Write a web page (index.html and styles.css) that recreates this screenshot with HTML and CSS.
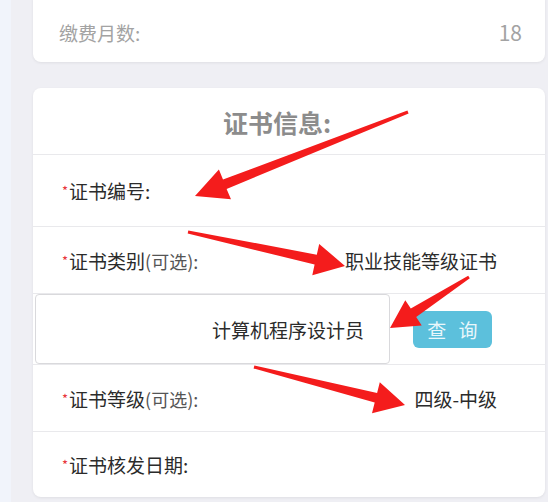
FILE: index.html
```html
<!DOCTYPE html>
<html lang="zh-CN">
<head>
<meta charset="utf-8">
<title>证书信息</title>
<link rel="stylesheet" href="styles.css">
</head>
<body>
<div class="page">
  <div class="rail"></div>
  <div class="main">
    <section class="card card-top">
      <div class="pay-row">
        <span class="pay-label">缴费月数:</span>
        <span class="pay-value">18</span>
      </div>
    </section>

    <section class="card card-cert">
      <div class="cert-title">证书信息:</div>
      <div class="row row-1">
        <span class="label"><i class="req">*</i>证书编号:</span>
      </div>
      <div class="row row-2">
        <span class="label"><i class="req">*</i>证书类别<span class="opt">(可选):</span></span>
        <span class="value">职业技能等级证书</span>
      </div>
      <div class="row row-search">
        <div class="search-box">计算机程序设计员</div>
        <button class="search-btn">查 询</button>
      </div>
      <div class="row row-3">
        <span class="label"><i class="req">*</i>证书等级<span class="opt">(可选):</span></span>
        <span class="value">四级-中级</span>
      </div>
      <div class="row row-4">
        <span class="label"><i class="req">*</i>证书核发日期:</span>
      </div>
    </section>
  </div>
</div>

<svg class="arrows" width="548" height="502" viewBox="0 0 548 502" aria-hidden="true">
  <polygon points="407.4,110.6 223.0,179.6 218.9,169.4 195,196 231.0,199.3 226.6,189.0 408.6,113.4"/>
  <polygon points="187.7,233.5 314.6,264.5 312.3,275.3 345,266 319.2,243.9 316.8,254.7 188.3,230.5"/>
  <polygon points="468.2,275.7 410.8,308.6 405.3,300.2 390,328 421.7,325.4 416.2,317.0 469.8,278.3"/>
  <polygon points="253.6,368.5 374.7,402.6 372.0,413.2 405,405 379.8,382.2 377.1,392.9 254.4,365.5"/>
</svg>
</body>
</html>
```

FILE: styles.css
```css
* { box-sizing: border-box; }

html, body {
  margin: 0;
  padding: 0;
  background: #efeff4;
  font-family: "Noto Sans CJK SC", "Noto Sans", "Liberation Sans", sans-serif;
  overflow: hidden;
}

.page {
  display: flex;
  width: 548px;
  height: 502px;
  position: relative;
}

.rail {
  width: 11px;
  flex: 0 0 11px;
  background: #f1f4fb;
}

.main {
  flex: 1;
  padding-left: 22px;
  padding-right: 3px;
  display: flex;
  flex-direction: column;
}

.card {
  background: #ffffff;
  border-radius: 8px;
  box-shadow: 0 1px 3px rgba(0, 0, 0, 0.07);
}

.card-top {
  margin-top: -8px;
}

.pay-row {
  height: 70px;
  padding: 10px 23px 0 26px;
  display: flex;
  align-items: center;
  justify-content: space-between;
  font-size: 19px;
  color: #a3a3a3;
}

.pay-value {
  font-size: 21px;
}

.card-cert {
  margin-top: 26px;
}

.cert-title {
  height: 67px;
  display: flex;
  align-items: center;
  justify-content: center;
  padding-right: 24px;
  padding-top: 2px;
  font-size: 25px;
  font-weight: bold;
  color: #8c8c8c;
  border-bottom: 1px solid #e9e9ec;
}

.row {
  display: flex;
  align-items: center;
  justify-content: space-between;
  padding: 0 48px 0 29px;
  border-bottom: 1px solid #e9e9ec;
  font-size: 19px;
  color: #2b2b2b;
}

.row-1 { height: 72px; }
.row-2 { height: 67px; }
.row-3 { height: 67px; }
.row-4 { height: 65px; border-bottom: none; }

.label {
  display: flex;
  align-items: baseline;
}

.req {
  font-style: normal;
  color: #e8343a;
  font-size: 13px;
  margin-right: 1px;
  position: relative;
  top: -3px;
}

.opt {
  font-size: 18px;
  color: #555555;
}

.value {
  color: #2b2b2b;
}

.row-search {
  height: 71px;
  padding: 0 0 0 2px;
  justify-content: flex-start;
  align-items: stretch;
}

.search-box {
  width: 355px;
  border: 1px solid #d9d9dc;
  border-radius: 4px;
  display: flex;
  align-items: center;
  justify-content: flex-end;
  padding-right: 25px;
  padding-top: 1px;
  font-size: 19px;
  color: #2b2b2b;
}

.search-btn {
  align-self: center;
  margin-left: 23px;
  width: 79px;
  height: 37px;
  border: none;
  border-radius: 6px;
  background: #5cc0dc;
  color: #eaf7fb;
  font-family: "Noto Sans CJK SC", sans-serif;
  font-size: 19px;
  letter-spacing: 4px;
  padding: 0 0 0 4px;
}

.arrows {
  position: absolute;
  left: 0;
  top: 0;
  pointer-events: none;
}

.arrows polygon {
  fill: #f41c1c;
}
```
